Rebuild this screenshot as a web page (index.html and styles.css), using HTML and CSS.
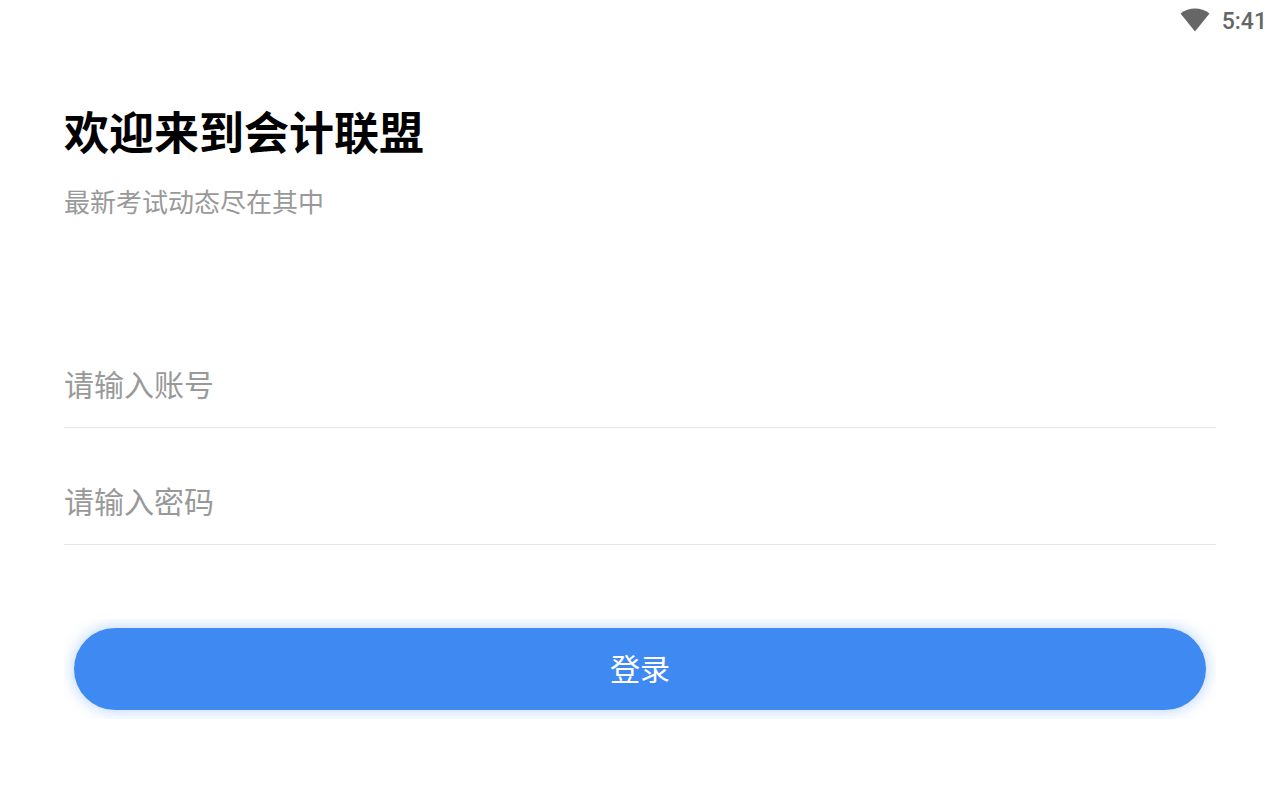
FILE: index.html
```html
<!DOCTYPE html>
<html lang="zh-CN">
<head>
    <meta charset="UTF-8">
    <meta name="viewport" content="width=device-width, initial-scale=1.0">
    <title>会计联盟</title>
    <link rel="stylesheet" href="styles.css">
</head>
<body>

    <header class="status-bar">
        <svg class="wifi" viewBox="0 0 30 24" aria-hidden="true">
            <path d="M0.5 5.5C9 -1.2 21 -1.2 29.5 5.5L15 23.5Z"/>
        </svg>
        <span class="time">5:41</span>
    </header>

    <main class="login">
        <h1>欢迎来到会计联盟</h1>
        <p class="subtitle">最新考试动态尽在其中</p>

        <form class="login-form">
            <input class="field" type="text" id="account" placeholder="请输入账号" aria-label="请输入账号">
            <input class="field" type="password" id="password" placeholder="请输入密码" aria-label="请输入密码">
            <div class="btn-wrap">
                <button class="login-btn" type="button">登录</button>
            </div>
        </form>
    </main>

</body>
</html>
```

FILE: styles.css
```css
* {
    box-sizing: border-box;
}
body {
    margin: 0;
    background: #fff;
    font-family: "Noto Sans CJK SC", sans-serif;
}
.status-bar {
    display: flex;
    justify-content: flex-end;
    align-items: center;
    gap: 12px;
    height: 40px;
    padding: 0 13px;
}
.wifi {
    width: 30px;
    height: 24px;
    fill: #666;
}
.time {
    padding-top: 4px;
    font-family: Roboto, sans-serif;
    font-size: 23px;
    font-weight: 500;
    line-height: 40px;
    color: #666;
}
.login {
    padding: 58px 5%;
}
h1 {
    margin: 0;
    font-size: 45px;
    font-weight: bold;
    line-height: 66px;
    color: #000;
}
.subtitle {
    margin: 17px 0 0;
    font-size: 26px;
    line-height: 40px;
    color: #999;
}
.login-form {
    display: flex;
    flex-direction: column;
    margin-top: 123px;
}
.field {
    width: 100%;
    height: 84px;
    margin-bottom: 33px;
    padding: 0 0 6px;
    border: none;
    border-bottom: 1px solid #e5e5e5;
    outline: none;
    background: none;
    font-family: inherit;
    font-size: 30px;
    color: #333;
}
.field::placeholder {
    color: #999;
}
/* cuts the glow off at the edge of the form */
.btn-wrap {
    margin-top: 41px;
    padding: 9px 10px;
    overflow: hidden;
}
.login-btn {
    display: block;
    width: 100%;
    height: 82px;
    padding: 0 0 4px;
    border: none;
    border-radius: 41px;
    background: #3f89f2;
    box-shadow: 0 0 16px rgba(63, 137, 242, 0.4);
    font-family: inherit;
    font-size: 30px;
    color: #fff;
    cursor: pointer;
}
```
